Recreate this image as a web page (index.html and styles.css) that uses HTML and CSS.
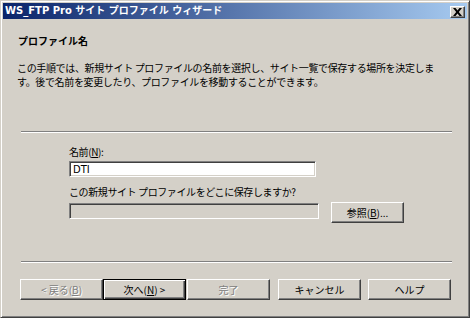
FILE: index.html
```html
<!DOCTYPE html>
<html lang="ja">
<head>
    <meta charset="UTF-8">
    <title>WS_FTP Pro サイト プロファイル ウィザード</title>
    <link rel="stylesheet" href="styles.css">
</head>
<body>

<div class="window">
    <div class="titlebar">
        <span class="title">WS_FTP Pro サイト プロファイル ウィザード</span>
        <button class="close-btn" title="閉じる">
            <svg width="9" height="8" viewBox="0 0 9 8">
                <path d="M0 0h2.5l2 2.6L6.5 0H9L5.8 4 9 8H6.5l-2-2.6L2.5 8H0l3.2-4z" fill="#000"/>
            </svg>
        </button>
    </div>

    <div class="header">
        <h2>プロファイル名</h2>
        <p class="desc">この手順では、新規サイト プロファイルの名前を選択し、サイト一覧で保存する場所を決定しま<br>す。後で名前を変更したり、プロファイルを移動することができます。</p>
    </div>

    <div class="separator"></div>

    <div class="form">
        <label class="field-label" for="profileName">名前(<u>N</u>):</label>
        <input type="text" id="profileName" class="text-input" value="DTI">

        <label class="field-label second">この新規サイト プロファイルをどこに保存しますか?</label>
        <div class="folder-row">
            <div class="text-input disabled"></div>
            <button class="btn browse">参照(<u>B</u>)...</button>
        </div>
    </div>

    <div class="separator bottom"></div>

    <div class="buttons">
        <button class="btn nav disabled-btn">&lt; 戻る(<u>B</u>)</button>
        <button class="btn nav default">次へ(<u>N</u>) &gt;</button>
        <button class="btn nav disabled-btn">完了</button>
        <button class="btn nav cancel">キャンセル</button>
        <button class="btn nav help">ヘルプ</button>
    </div>
</div>

</body>
</html>
```

FILE: styles.css
```css
html, body {
    margin: 0;
    padding: 0;
}

body {
    width: 470px;
    height: 318px;
    background: #d4d0c8;
    font-family: "Noto Sans CJK JP", "Liberation Sans", sans-serif;
    font-size: 10px;
    color: #000;
    overflow: hidden;
}

.window {
    box-sizing: border-box;
    width: 470px;
    height: 318px;
    background: #d4d0c8;
    border: 1px solid;
    border-color: #d4d0c8 #404040 #404040 #d4d0c8;
    box-shadow: inset 1px 1px 0 #fff, inset -1px -1px 0 #808080;
    padding: 2px;
    display: flex;
    flex-direction: column;
}

.titlebar {
    height: 16px;
    background: linear-gradient(to right, #0a246a, #a6caf0);
    display: flex;
    align-items: center;
    justify-content: space-between;
    padding: 0 2px 0 2px;
}

.title {
    color: #fff;
    font-family: "DejaVu Sans", "Noto Sans CJK JP", sans-serif;
    font-weight: bold;
    font-size: 10px;
    line-height: 16px;
    white-space: nowrap;
}

.close-btn {
    box-sizing: border-box;
    width: 15px;
    height: 12px;
    padding: 0;
    margin-top: 1px;
    background: #d4d0c8;
    border: 1px solid;
    border-color: #fff #404040 #404040 #fff;
    box-shadow: inset -1px -1px 0 #808080;
    display: flex;
    align-items: center;
    justify-content: center;
}

.header {
    padding: 0 0 0 14px;
}

.header h2 {
    margin: 15px 0 0 1px;
    font-size: 10px;
    font-weight: bold;
    line-height: 14px;
}

.desc {
    margin: 13px 0 0 0;
    line-height: 14px;
    letter-spacing: -0.35px;
    white-space: nowrap;
}

.separator {
    margin: 42px 15px 0 18px;
    border-top: 1px solid #808080;
    border-bottom: 1px solid #fff;
}

.separator.bottom {
    margin-top: 38px;
}

.form {
    display: flex;
    flex-direction: column;
    align-items: flex-start;
    padding-left: 66px;
}

.field-label {
    margin-top: 12px;
    line-height: 14px;
    letter-spacing: -0.4px;
}

.field-label.second {
    margin-top: 8px;
}

.text-input {
    box-sizing: border-box;
    width: 247px;
    height: 16px;
    margin: 2px 0 0 0;
    padding: 0 3px;
    background: #fff;
    border: 1px solid;
    border-color: #808080 #fff #fff #808080;
    box-shadow: inset 1px 1px 0 #404040, inset -1px -1px 0 #d4d0c8;
    font-family: "DejaVu Sans", sans-serif;
    font-size: 10px;
    outline: none;
}

.text-input.disabled {
    width: 250px;
    background: #d4d0c8;
    margin-top: 1px;
}

.folder-row {
    display: flex;
    align-items: flex-start;
    margin-top: 3px;
}

.btn {
    box-sizing: border-box;
    height: 21px;
    padding: 0;
    background: #d4d0c8;
    border: 1px solid;
    border-color: #fff #404040 #404040 #fff;
    box-shadow: inset -1px -1px 0 #808080;
    font-family: "Noto Sans CJK JP", "Liberation Sans", sans-serif;
    font-size: 10px;
    color: #000;
}

.browse {
    width: 73px;
    margin-left: 12px;
}

.buttons {
    display: flex;
    margin-top: 16px;
    padding-left: 17px;
}

.nav {
    width: 83px;
}

.default {
    border: 1px solid #000;
    box-shadow: inset 1px 1px 0 #fff, inset -1px -1px 0 #404040, inset -2px -2px 0 #808080;
}

.disabled-btn {
    color: #808080;
    text-shadow: 1px 1px 0 #fff;
}

.disabled-btn + .default + .disabled-btn {
    margin-left: 1px;
}

.cancel {
    margin-left: 8px;
}

.help {
    margin-left: 7px;
}
```
